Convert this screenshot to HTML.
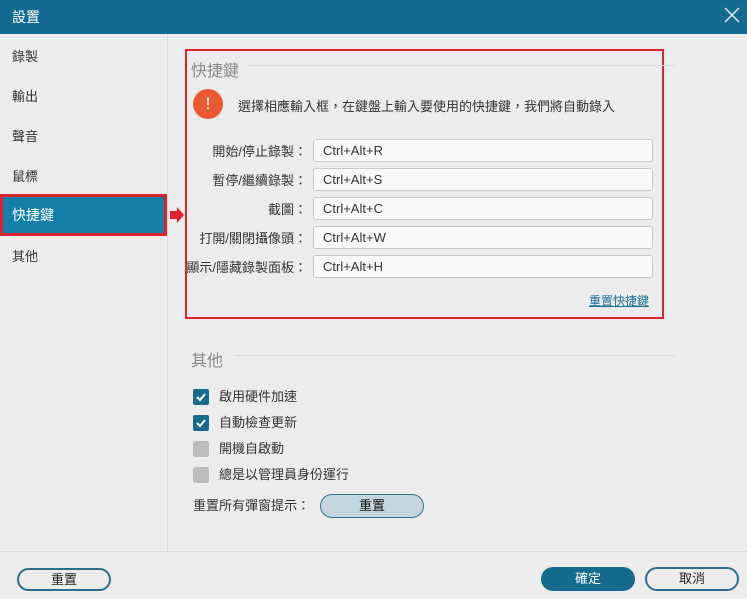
<!DOCTYPE html>
<html><head><meta charset="utf-8"><style>
*{margin:0;padding:0;box-sizing:border-box}
body{width:747px;height:599px;background:#ececec;font-family:"Liberation Sans","Noto Sans CJK TC",sans-serif;font-size:13px;color:#333;position:relative;overflow:hidden}
.a{position:absolute}
.title{left:0;top:0;width:747px;height:34px;background:#136c8f;color:#fff;font-size:14px;line-height:34px;padding-left:12px}
.side{left:0;top:34px;width:168px;height:517px;border-right:1px solid #dcdcdc;background:#ececec}
.si{position:absolute;left:12px;font-size:13px;color:#333}
.sel{left:0;top:194px;width:167px;height:42px;background:#157fa9;border:3px solid #d9232d;color:#fff;font-size:14px;line-height:36px;padding-left:9px}
.red{left:185px;top:49px;width:479px;height:270px;border:2px solid #d9232d}
.h{font-size:16px;color:#888}
.line{height:1px;background:#dadada}
.lbl{left:150px;width:157px;text-align:right;font-size:13px;color:#333;line-height:23px;white-space:nowrap}
.inp{left:313px;width:340px;height:23px;background:#f8f8f8;border:1px solid #c9c9c9;border-radius:3px;font-size:13px;line-height:21px;padding-left:9px;color:#333}
.cb{left:193px;width:16px;height:16px;border-radius:2px;background:#bdbdbd}
.cb.on{background:#176b8d}
.ct{left:219px;font-size:13px;color:#333;line-height:16px}
.btn{border-radius:13px;text-align:center;font-size:13px}
</style></head><body>
<div class="a title">設置</div>
<svg class="a" style="left:723px;top:6px" width="18" height="18"><path d="M2 2L16 16M16 2L2 16" stroke="#e6f0f5" stroke-width="1.4"/></svg>
<div class="a side"></div>
<div class="si" style="top:46px">錄製</div>
<div class="si" style="top:86px">輸出</div>
<div class="si" style="top:126px">聲音</div>
<div class="si" style="top:166px">鼠標</div>
<div class="a sel">快捷鍵</div>
<div class="si" style="top:246px">其他</div>
<svg class="a" style="left:169px;top:207px" width="16" height="16"><path d="M1 4H8V0L15 8L8 16V12H1Z" fill="#e0222b"/></svg>
<div class="a red"></div>
<div class="a h" style="left:191px;top:57px">快捷鍵</div>
<div class="a line" style="left:248px;top:65px;width:427px"></div>
<div class="a" style="left:193px;top:89px;width:30px;height:30px;border-radius:50%;background:#e85a32;color:#fff;text-align:center;line-height:30px;font-size:17px">!</div>
<div class="a" style="left:238px;top:96px;font-size:13px">選擇相應輸入框，在鍵盤上輸入要使用的快捷鍵，我們將自動錄入</div>
<div class="a lbl" style="top:140px">開始/停止錄製：</div>
<div class="a lbl" style="top:169px">暫停/繼續錄製：</div>
<div class="a lbl" style="top:198px">截圖：</div>
<div class="a lbl" style="top:227px">打開/關閉攝像頭：</div>
<div class="a lbl" style="top:256px">顯示/隱藏錄製面板：</div>
<div class="a inp" style="top:139px">Ctrl+Alt+R</div>
<div class="a inp" style="top:168px">Ctrl+Alt+S</div>
<div class="a inp" style="top:197px">Ctrl+Alt+C</div>
<div class="a inp" style="top:226px">Ctrl+Alt+W</div>
<div class="a inp" style="top:255px">Ctrl+Alt+H</div>
<div class="a" style="left:589px;top:292px;font-size:12px;color:#1a6f96;text-decoration:underline">重置快捷鍵</div>
<div class="a h" style="left:191px;top:347px">其他</div>
<div class="a line" style="left:234px;top:355px;width:441px"></div>
<div class="a cb on" style="top:389px"><svg width="16" height="16"><path d="M4 8L7 11L12 5" stroke="#fff" stroke-width="2" fill="none"/></svg></div>
<div class="a cb on" style="top:415px"><svg width="16" height="16"><path d="M4 8L7 11L12 5" stroke="#fff" stroke-width="2" fill="none"/></svg></div>
<div class="a cb" style="top:441px"></div>
<div class="a cb" style="top:467px"></div>
<div class="a ct" style="top:389px">啟用硬件加速</div>
<div class="a ct" style="top:415px">自動檢查更新</div>
<div class="a ct" style="top:441px">開機自啟動</div>
<div class="a ct" style="top:467px">總是以管理員身份運行</div>
<div class="a" style="left:193px;top:498px;line-height:16px">重置所有彈窗提示：</div>
<div class="a btn" style="left:320px;top:494px;width:104px;height:24px;background:#c3d6df;border:1px solid #2f6f8e;color:#111;line-height:22px">重置</div>
<div class="a line" style="left:0;top:551px;width:747px"></div>
<div class="a btn" style="left:17px;top:568px;width:94px;height:23px;border:2px solid #2a6f8f;color:#222;line-height:19px">重置</div>
<div class="a btn" style="left:541px;top:567px;width:94px;height:24px;background:#156b8e;color:#fff;line-height:24px">確定</div>
<div class="a btn" style="left:645px;top:567px;width:94px;height:24px;border:2px solid #2a6f8f;color:#222;line-height:20px">取消</div>
</body></html>
